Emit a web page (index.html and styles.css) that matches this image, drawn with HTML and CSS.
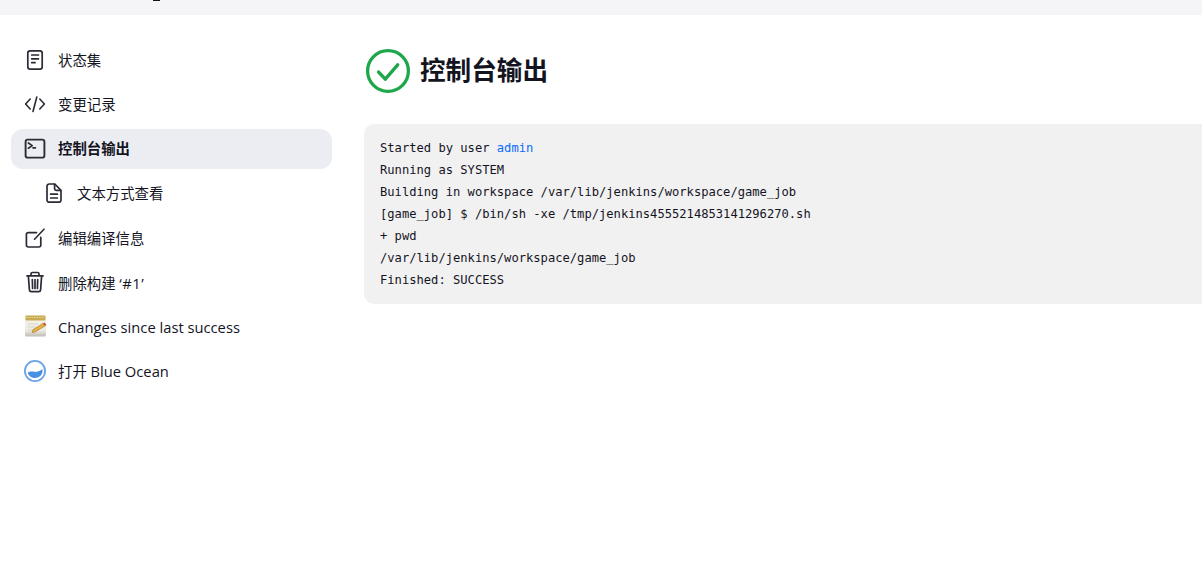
FILE: index.html
```html
<!DOCTYPE html>
<html lang="zh">
<head>
<meta charset="utf-8">
<title>控制台输出</title>
<link rel="stylesheet" href="styles.css">
</head>
<body>
<header class="topbar"><span class="topbar-mark"></span></header>
<div class="layout">
  <nav class="sidebar">
    <a class="item">
      <svg class="icon" viewBox="0 0 24 24"><rect x="4.800" y="2.800" width="14.400" height="18.400" rx="2.400" class="st"/><path d="M8.700 7h6.800M8.700 10.800h6.800M8.700 14.600h3.400" class="st"/></svg>
      <span class="label">状态集</span>
    </a>
    <a class="item">
      <svg class="icon" viewBox="0 0 24 24"><path d="M7.200 7 2.600 12l4.600 5M16.800 7l4.600 5-4.600 5M13.800 5 10 19.500" class="st thin"/></svg>
      <span class="label">变更记录</span>
    </a>
    <a class="item active">
      <svg class="icon" viewBox="0 0 24 24"><rect x="2.600" y="2.600" width="18.800" height="18" rx="2.200" class="st heavy"/><path d="m5.400 6 3.800 2.600-3.800 2.600M10 10.800h2.400" class="st"/></svg>
      <span class="label raised">控制台输出</span>
    </a>
    <a class="item sub">
      <svg class="icon" viewBox="0 0 24 24"><path d="M5 5.200A2.200 2.200 0 0 1 7.200 3h5.600L19 9.400v9.600a2.200 2.200 0 0 1-2.200 2.200H7.200A2.200 2.200 0 0 1 5 19Z" class="st"/><path d="M12.600 3.400v4.400a1.600 1.600 0 0 0 1.600 1.600h4.400M8.600 13.200h6.800M8.600 17h6.800" class="st"/></svg>
      <span class="label">文本方式查看</span>
    </a>
    <a class="item">
      <svg class="icon" viewBox="0 0 24 24"><path d="M13.500 6.600H5.200a1.800 1.800 0 0 0-1.800 1.800v10.800a1.800 1.800 0 0 0 1.800 1.800h10.800a1.800 1.800 0 0 0 1.800-1.800v-7.800" class="st"/><path d="M11.500 13.200 21 3.200" class="st thin"/></svg>
      <span class="label">编辑编译信息</span>
    </a>
    <a class="item">
      <svg class="icon" viewBox="0 0 24 24"><path d="M5.400 6.400 6.400 19.800a2 2 0 0 0 2 1.800h7.200a2 2 0 0 0 2-1.800l1-13.400" class="st"/><path d="M4 5.900h16M8 5.600V3.900A1.400 1.400 0 0 1 9.400 2.500h5.200A1.400 1.400 0 0 1 16 3.900v1.700M9.300 9.500l.3 9M12 9.500v9M14.700 9.500l-.3 9" class="st"/></svg>
      <span class="label lowered">删除构建 <span class="quote">‘#1’</span></span>
    </a>
    <a class="item">
      <svg class="icon" viewBox="0 0 24 24">
        <defs><linearGradient id="pad" x1="0" y1="0" x2="0" y2="1"><stop offset="0" stop-color="#f6f4ea"/><stop offset=".7" stop-color="#eeece2"/><stop offset="1" stop-color="#bdbdb6"/></linearGradient></defs>
        <rect x="2" y="1.500" width="21" height="21" rx="1.500" class="pad-page"/>
        <rect x="2.500" y="1.500" width="20" height="5" rx="1" class="pad-top"/>
        <path d="M3.500 3.500h18" class="pad-holes"/>
        <path d="M5 10h10M5 13h7M5 16h5" class="pad-lines"/>
        <path d="m9 18.500 1.200-3.100 10-6.100 1.800 2.600-10 6.100Z" class="pencil"/>
        <path d="m20.200 9.300 1.400-.9 1.800 2.600-1.400.9Z" class="pencil-tip"/>
      </svg>
      <span class="label lowered latin">Changes since last success</span>
    </a>
    <a class="item">
      <svg class="icon" viewBox="0 0 24 24"><circle cx="12" cy="12" r="10.100" class="bo-ring"/><path d="M4.800 13.600c2.400-1.600 4.400-1.200 6.900-.8 3 .5 5-1 7.800-2.500.7 4.800-3 8.800-7.500 8.800-3.800 0-6.700-2.400-7.200-5.500Z" class="bo-wave"/></svg>
      <span class="label">打开 <span class="latin">Blue Ocean</span></span>
    </a>
  </nav>
  <main class="main">
    <div class="heading">
      <svg class="status" viewBox="0 0 48 48"><circle cx="24" cy="24" r="20.400" class="status-ring"/><path d="m14.500 25 6.800 7.200 12.400-14.400" class="status-check"/></svg>
      <h1>控制台输出</h1>
    </div>
    <pre class="console">Started by user <a class="link">admin</a>
Running as SYSTEM
Building in workspace /var/lib/jenkins/workspace/game_job
[game_job] $ /bin/sh -xe /tmp/jenkins4555214853141296270.sh
+ pwd
/var/lib/jenkins/workspace/game_job
Finished: SUCCESS</pre>
  </main>
</div>
</body>
</html>
```

FILE: styles.css
```css
* { box-sizing: border-box; }
html, body { margin: 0; height: 100%; overflow: hidden; background: #fff; }
body {
  color: #14141f;
  font-family: "Open Sans", "Noto Sans CJK SC", sans-serif;
  font-size: 14.4px;
}
.topbar { height: 15px; background: #f5f5f7; position: relative; }
.topbar-mark { position: absolute; left: 153px; top: 0; width: 7px; height: 1px; background: #14141f; }
.layout { display: flex; gap: 32px; padding-left: 11px; }
.sidebar { width: 321px; flex: none; display: flex; flex-direction: column; gap: 4.4px; padding-top: 25px; }
.item { display: flex; align-items: center; gap: 11px; height: 40px; padding-left: 12px; border-radius: 12px; color: #14141f; }
.item.active { background: #ecedf2; font-weight: 700; }
.item.sub { padding-left: 31px; }
.label { margin-bottom: 1px; }
.label.raised { margin-bottom: 3px; }
.label.lowered { margin-bottom: 0; margin-top: 1px; }
.latin { font-size: 14.72px; }
.quote { font-size: 14.72px; letter-spacing: .5px; }
.icon { width: 24px; height: 24px; flex: none; }
.st { fill: none; stroke: #2b2b36; stroke-width: 1.7; stroke-linecap: round; stroke-linejoin: round; }
.thin { stroke-width: 1.6; }
.heavy { stroke-width: 1.9; }
.pad-page { fill: url(#pad); }
.pad-top { fill: #c9ad55; }
.pad-holes { fill: none; stroke: #e6d590; stroke-width: 1; stroke-dasharray: 1.500 1; }
.pad-lines { fill: none; stroke: #d8d6ca; stroke-width: 1; }
.pencil { fill: #e8ae3e; stroke: #8a6a2a; stroke-width: .5; }
.pencil-tip { fill: #c9483a; }
.bo-ring { fill: #fff; stroke: #6ba4ea; stroke-width: 1.800; }
.bo-wave { fill: #4a90e2; }
.main { flex: 1; min-width: 0; margin-right: -30px; padding-top: 32px; }
.heading { display: flex; align-items: center; gap: 8px; height: 48px; margin-bottom: 29px; }
.status { width: 48px; height: 48px; flex: none; }
.status-ring { fill: none; stroke: #1ea64b; stroke-width: 3.300; }
.status-check { fill: none; stroke: #1ea64b; stroke-width: 3.300; stroke-linecap: round; stroke-linejoin: round; }
h1 { margin: 0 0 4px; font-size: 25.6px; font-weight: 700; line-height: 1; font-family: "Noto Sans CJK SC", sans-serif; }
.console {
  margin: 0;
  padding: 13px 16px;
  background: #f1f1f1;
  border-radius: 10px;
  font-family: "DejaVu Sans Mono", monospace;
  font-size: 12.14px;
  line-height: 22px;
  color: #14141f;
}
.link { color: #0b6aff; }
```
